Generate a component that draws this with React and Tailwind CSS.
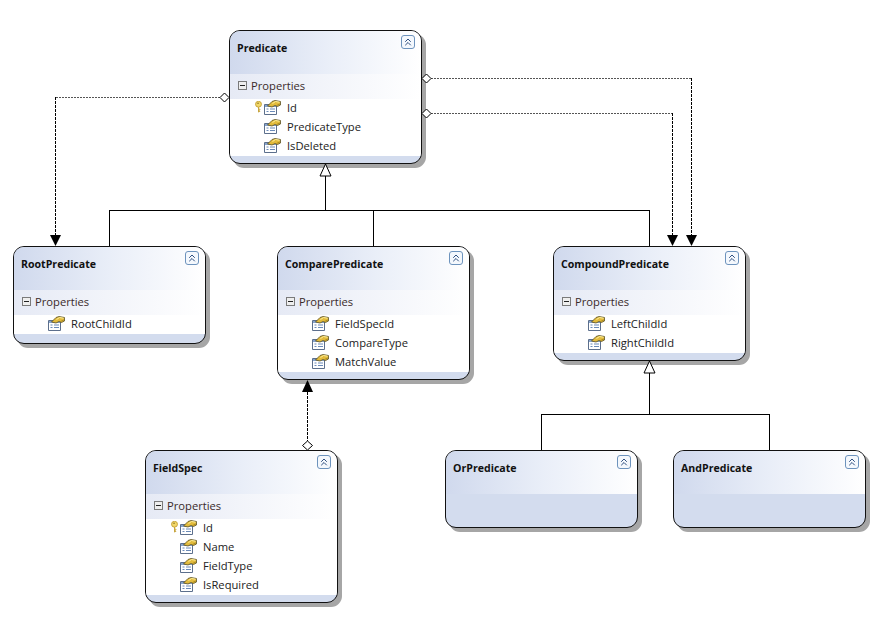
import { ChevronsUp } from "lucide-react";

const FONT = "font-['Open_Sans','Noto_Sans',sans-serif]";

// Entities of the diagram, placed on a free canvas
const entities = [
  { name: "Predicate", pos: "left-[229px] top-[30px] h-[134px]", props: [["Id", true], ["PredicateType"], ["IsDeleted"]] },
  { name: "RootPredicate", pos: "left-[13px] top-[246px] h-[98px]", props: [["RootChildId"]] },
  { name: "ComparePredicate", pos: "left-[277px] top-[246px] h-[134px]", props: [["FieldSpecId"], ["CompareType"], ["MatchValue"]] },
  { name: "CompoundPredicate", pos: "left-[553px] top-[246px] h-[115px]", props: [["LeftChildId"], ["RightChildId"]] },
  { name: "FieldSpec", pos: "left-[145px] top-[450px] h-[153px]", props: [["Id", true], ["Name"], ["FieldType"], ["IsRequired"]] },
  { name: "OrPredicate", pos: "left-[445px] top-[450px] h-[78px]" },
  { name: "AndPredicate", pos: "left-[673px] top-[450px] h-[78px]" },
];

const PropertyIcon = () => (
  <svg width="17" height="15" viewBox="0 0 17 15" className="mb-[3px] shrink-0">
    <path d="M.5 4.5h12v10H.5z" fill="#fff" stroke="#5c6f8c" />
    <path d="M1 5h11v2H1z" fill="#86a3cc" />
    <path d="M2.5 9h2M6 9h5M2.5 11.5h2M6 11.5h5" stroke="#6a8ab8" />
    <path d="M3.5 6L8 1.5 11 .5 16.5 1.5 16.5 5 13.5 6.5 11 5.5 8 7Z" fill="#e2bb3c" stroke="#5a5226" strokeWidth="0.8" />
    <path d="M8.5 3.5l3-2 4 .7" fill="none" stroke="#fff0a0" />
    <path d="M12.5 5.5l3.5-1.5" stroke="#a98a20" />
  </svg>
);

const KeyIcon = () => (
  <svg width="9" height="12" viewBox="0 0 9 13" className="mb-[3px] shrink-0">
    <circle cx="4.5" cy="3.5" r="3.2" fill="#f2d768" stroke="#c4a23a" />
    <path d="M4.5 6.5v5.5l1.5-.8-.8-1 .8-1-.8-1" fill="#e4c24e" stroke="#c4a23a" />
    <circle cx="4" cy="2.4" r="0.9" fill="#8a7420" />
  </svg>
);

const Collapse = () => (
  <div className="flex h-[14px] w-[14px] items-center justify-center rounded-[3px] border border-[#6d93bd] bg-[#f4f8fd]">
    <ChevronsUp size={12} strokeWidth={2} className="text-[#2f4f80]" />
  </div>
);

const Entity = ({ name, pos, props }) => (
  <div className={`absolute w-[193px] overflow-hidden rounded-[11px] border-[1.5px] border-[#111] bg-[#d3dcee] ${pos}`}>
    <div className="flex h-[43px] items-start justify-between bg-gradient-to-r from-[#d0d9ed] via-[#e9eef8] to-white pl-[7px] pr-[6px] pt-[4px]">
      <span className="mt-[5px] text-[10.6px] leading-[16px] font-bold text-[#111]">{name}</span>
      <Collapse />
    </div>
    {props && (
      <>
        <div className="flex h-[25px] items-center gap-[4px] bg-gradient-to-r from-[#e6eaf5] to-white pl-[8px] text-[11.2px] text-[#3a2a2a]">
          <div className="mb-[2px] flex h-[9px] w-[9px] items-center justify-center border border-[#7a7a7a] bg-[#eee]">
            <div className="h-px w-[5px] bg-[#222]" />
          </div>
          <span>Properties</span>
        </div>
        <div className="bg-white">
          {props.map(([label, isKey]) => (
            <div key={label} className="flex h-[19px] items-center pl-[24px] text-[11.2px] text-[#222]">
              <div className="flex w-[10px] justify-start">{isKey && <KeyIcon />}</div>
              <PropertyIcon />
              <span className="mb-[1px] ml-[6px]">{label}</span>
            </div>
          ))}
        </div>
      </>
    )}
  </div>
);

const Shadow = ({ pos }) => (
  <div className={`absolute w-[193px] translate-x-[4px] translate-y-[4px] rounded-[11px] bg-[#a6a6a6] blur-[0.6px] ${pos}`} />
);

// Connector lines
const Connectors = () => (
  <svg width="879" height="628" className="absolute left-0 top-0">
    <g fill="none" stroke="#000" strokeWidth="1" shapeRendering="crispEdges">
      <path d="M325.5 176V210.5M109.5 246V210.5H649.5V246M373.5 210.5V246" />
      <path d="M649.5 373V414.5M541.5 450V414.5H769.5V450" />
    </g>
    <g fill="none" stroke="#555" strokeWidth="1" strokeDasharray="2 1" shapeRendering="crispEdges">
      <path d="M220 97.5H55" />
      <path d="M431 78.5H692" />
      <path d="M431 113.5H673" />
    </g>
    <g fill="none" stroke="#000" strokeWidth="1" strokeDasharray="3 1" shapeRendering="crispEdges">
      <path d="M55.5 97V237" />
      <path d="M691.5 78V237" />
      <path d="M672.5 113V237" />
      <path d="M307.5 392V441" />
    </g>
    <g fill="#fff" stroke="#000" strokeWidth="1">
      <path d="M320 176L325.5 164L331 176Z" />
      <path d="M644 373L649.5 361L655 373Z" />
      <path d="M220 97.5L224.5 93L229 97.5L224.5 102Z" />
      <path d="M422 78.5L426.5 74L431 78.5L426.5 83Z" />
      <path d="M422 113.5L426.5 109L431 113.5L426.5 118Z" />
      <path d="M302.5 445.5L307.5 441L312.5 445.5L307.5 450Z" />
    </g>
    <g fill="#000">
      <path d="M50 235H61L55.5 246Z" />
      <path d="M667 235H678L672.5 246Z" />
      <path d="M686 235H697L691.5 246Z" />
      <path d="M302 392H313L307.5 380Z" />
    </g>
  </svg>
);

export default function App() {
  return (
    <div className={`relative h-[628px] w-[879px] overflow-hidden bg-white ${FONT}`}>
      {entities.map((e) => (
        <Shadow key={e.name} pos={e.pos} />
      ))}
      <Connectors />
      {entities.map((e) => (
        <Entity key={e.name} {...e} />
      ))}
    </div>
  );
}
